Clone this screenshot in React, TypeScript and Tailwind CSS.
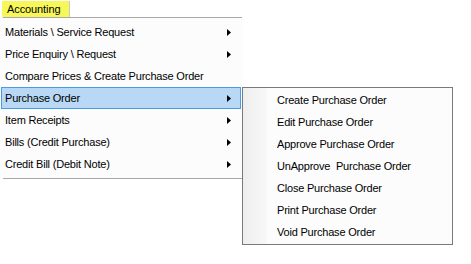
import React from "react";

const mainItems = [
  { name: "Materials \\ Service Request", sub: true },
  { name: "Price Enquiry \\ Request", sub: true },
  { name: "Compare Prices & Create Purchase Order", sub: false },
  { name: "Purchase Order", sub: true, active: true },
  { name: "Item Receipts", sub: true },
  { name: "Bills (Credit Purchase)", sub: true },
  { name: "Credit Bill (Debit Note)", sub: true },
];

const subItems = [
  "Create Purchase Order",
  "Edit Purchase Order",
  "Approve Purchase Order",
  "UnApprove  Purchase Order",
  "Close Purchase Order",
  "Print Purchase Order",
  "Void Purchase Order",
];

const Arrow = () => (
  <svg width="4" height="7" viewBox="0 0 4 7" className="block">
    <polygon points="0,0 4,3.5 0,7" fill="#000" />
  </svg>
);

export default function App() {
  return (
    <div
      className="relative w-[471px] h-[264px] bg-white text-[11px] text-black overflow-hidden"
      style={{ fontFamily: '"Liberation Sans", Arial, sans-serif' }}
    >
      {/* Top menu tab */}
      <div className="flex pt-[1px]">
        <div className="ml-[2px] w-[68px] h-[16px] bg-[#f7f75a] border-r border-[#c8c8c8] pl-[5px] leading-[16px] tracking-[-0.1px]">
          Accounting
        </div>
      </div>

      {/* Dropdown */}
      <div className="w-[242px] bg-[#fcfcfc]">
        <div className="ml-[3px] h-px bg-[#a8a8a8]" />
        <div className="pt-[3px] pb-[3px]">
          {mainItems.map((item) => (
            <div
              key={item.name}
              className={`flex items-center justify-between h-[22px] mx-px tracking-[-0.2px] ${
                item.active
                  ? "bg-[#b8d8f5] border border-[#4a9be0] pl-[3px] pr-[9px]"
                  : "pl-[4px] pr-[10px]"
              }`}
            >
              <span className="whitespace-pre">{item.name}</span>
              {item.sub && <Arrow />}
            </div>
          ))}
        </div>
        <div className="ml-[3px] h-px bg-[#a8a8a8]" />
      </div>

      {/* Submenu */}
      <div className="absolute left-[242px] top-[87px] w-[211px] h-[158px] bg-[#fcfcfc] border border-[#7a7a7a] flex">
        <div className="w-[24px] bg-gradient-to-r from-[#eeeeee] to-[#f8f8f8]" />
        <div className="flex-1 pt-[1px]">
          {subItems.map((s) => (
            <div
              key={s}
              className="h-[22px] flex items-center pl-[10px] whitespace-pre tracking-[-0.2px]"
            >
              {s}
            </div>
          ))}
        </div>
      </div>
    </div>
  );
}
